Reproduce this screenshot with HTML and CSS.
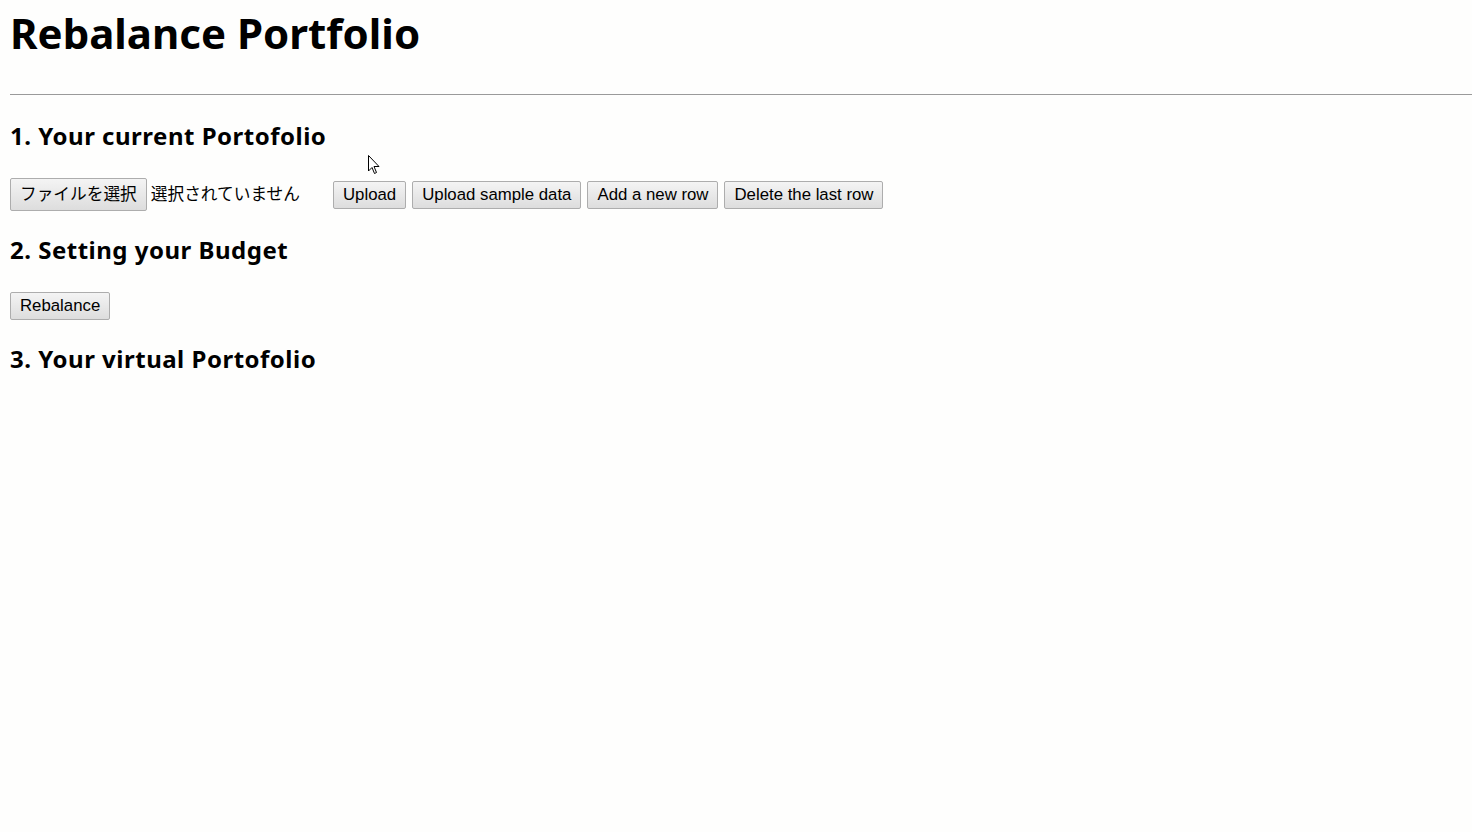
FILE: index.html
```html
<!DOCTYPE html>
<html lang="ja">
<head>
<meta charset="utf-8">
<title>Rebalance Portfolio</title>
<link rel="stylesheet" href="styles.css">
</head>
<body>
<h1 class="title">Rebalance Portfolio</h1>
<hr class="rule">
<section class="step">
  <h2 class="step-title step-title-first">1. Your current Portofolio</h2>
  <div class="controls controls-file">
    <div class="file-input">
      <button class="btn btn-file" type="button">ファイルを選択</button>
      <span class="file-status">選択されていません</span>
    </div>
    <div class="btn-group">
      <button class="btn" type="button">Upload</button>
      <button class="btn" type="button">Upload sample data</button>
      <button class="btn" type="button">Add a new row</button>
      <button class="btn" type="button">Delete the last row</button>
    </div>
  </div>
</section>
<section class="step">
  <h2 class="step-title">2. Setting your Budget</h2>
  <div class="controls">
    <button class="btn" type="button">Rebalance</button>
  </div>
</section>
<section class="step">
  <h2 class="step-title">3. Your virtual Portofolio</h2>
</section>
<svg class="cursor" width="12" height="20" viewBox="0 0 12 20"><path d="M0.5 0.5 L0.5 16 L4 12.5 L6.5 18.5 L8.5 17.5 L6 11.5 L11 11.5 Z" fill="#fff" stroke="#000" stroke-width="1"/></svg>
</body>
</html>
```
FILE: styles.css
```css
html, body {
  margin: 0;
  padding: 0;
  background: #fefefd;
  color: #000;
}
body {
  padding-left: 10px;
  font-family: "Noto Sans", "Noto Sans CJK JP", sans-serif;
  position: relative;
  min-height: 832px;
}
.title {
  margin: 0;
  padding-top: 6px;
  font-size: 42px;
  line-height: 54px;
  font-weight: 700;
}
.rule {
  margin: 34px 0 0 0;
  border: 0;
  border-top: 1px solid #9a9a9a;
  height: 0;
}
.step-title {
  margin: 23px 0 0 0;
  font-size: 24px;
  line-height: 32px;
  font-weight: 700;
  letter-spacing: 0.5px;
}
.step-title-first {
  margin-top: 25px;
}
.controls {
  display: flex;
  align-items: center;
  margin-top: 26px;
}
.controls-file {
  margin-top: 26px;
}
.file-input {
  display: flex;
  align-items: center;
  gap: 4px;
  margin-right: 33px;
}
.file-status {
  font-family: "Noto Sans CJK JP", sans-serif;
  font-size: 16.7px;
  padding-bottom: 3px;
}
.btn-group {
  display: flex;
  gap: 6px;
}
.btn {
  font-family: "Liberation Sans", Arial, sans-serif;
  font-size: 16.8px;
  line-height: 18px;
  height: 28px;
  padding: 0 9px;
  color: #000;
  border: 1px solid #adadad;
  border-radius: 2px;
  background: linear-gradient(#f4f4f4, #dddddd);
}
.btn-file {
  font-family: "Noto Sans CJK JP", sans-serif;
  font-size: 16.7px;
  height: 33px;
  padding-bottom: 3px;
}
.cursor {
  position: absolute;
  left: 368px;
  top: 155px;
}
```
